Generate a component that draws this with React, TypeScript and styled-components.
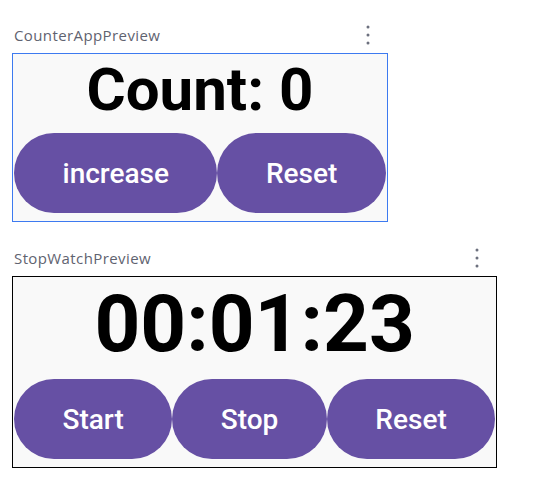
import React from "react"
import styled, { createGlobalStyle } from "styled-components"

const PURPLE = "#6650a4"

const GlobalStyle = createGlobalStyle`
  body {
    margin: 0;
    background: #ffffff;
    font-family: Roboto, "Noto Sans", sans-serif;
  }
`

const MoreIcon = () => (
  <svg width="4" height="20" viewBox="0 0 4 20">
    <circle cx="2" cy="2" r="1.5" fill="#6c707e" />
    <circle cx="2" cy="10" r="1.5" fill="#6c707e" />
    <circle cx="2" cy="18" r="1.5" fill="#6c707e" />
  </svg>
)

type PreviewProps = {
  title: string
  selected?: boolean
  children: React.ReactNode
}

const Preview = ({ title, selected, children }: PreviewProps) => {
  return (
    <Section>
      <Header>
        <Title>{title}</Title>
        <IconSlot>
          <MoreIcon />
        </IconSlot>
      </Header>
      <Frame $selected={selected}>{children}</Frame>
    </Section>
  )
}

const App = () => {
  return (
    <Page>
      <GlobalStyle />
      <Preview title="CounterAppPreview" selected>
        <Display $size={60}>Count: 0</Display>
        <ButtonRow>
          <PillButton>increase</PillButton>
          <PillButton>Reset</PillButton>
        </ButtonRow>
      </Preview>
      <Preview title="StopWatchPreview">
        <Display $size={80}>00:01:23</Display>
        <ButtonRow>
          <PillButton>Start</PillButton>
          <PillButton>Stop</PillButton>
          <PillButton>Reset</PillButton>
        </ButtonRow>
      </Preview>
    </Page>
  )
}

const Page = styled.div`
  padding: 20px 0 0 12px;
  display: flex;
  flex-direction: column;
  align-items: flex-start;
  gap: 21px;
`

const Section = styled.div`
  display: inline-flex;
  flex-direction: column;
`

const Header = styled.div`
  height: 33px;
  box-sizing: border-box;
  padding: 5px 18px 0 2px;
  display: flex;
  justify-content: space-between;
  align-items: flex-start;
`

const Title = styled.div`
  font-family: "Open Sans", "Noto Sans", sans-serif;
  font-size: 15px;
  letter-spacing: 0.4px;
  line-height: 20px;
  color: #5f6370;
`

const IconSlot = styled.div`
  display: flex;
`

const Frame = styled.div<{ $selected?: boolean }>`
  border: 1px solid ${(p) => (p.$selected ? "#3d7af0" : "#000000")};
  background: #f9f9f9;
  padding: 0 1px;
  display: flex;
  flex-direction: column;
  align-items: center;
`

const Display = styled.div<{ $size: number }>`
  font-family: Roboto, sans-serif;
  font-weight: 700;
  font-size: ${(p) => p.$size}px;
  line-height: ${(p) => Math.round(p.$size * 1.175)}px;
  color: #000000;
`

const ButtonRow = styled.div`
  display: flex;
`

const PillButton = styled.button`
  height: 80px;
  margin: 8px 0;
  padding: 0 48.5px;
  border: none;
  border-radius: 40px;
  background: ${PURPLE};
  color: #ffffff;
  font-family: Roboto, sans-serif;
  font-weight: 500;
  font-size: 28px;
  cursor: pointer;
`

export default App
